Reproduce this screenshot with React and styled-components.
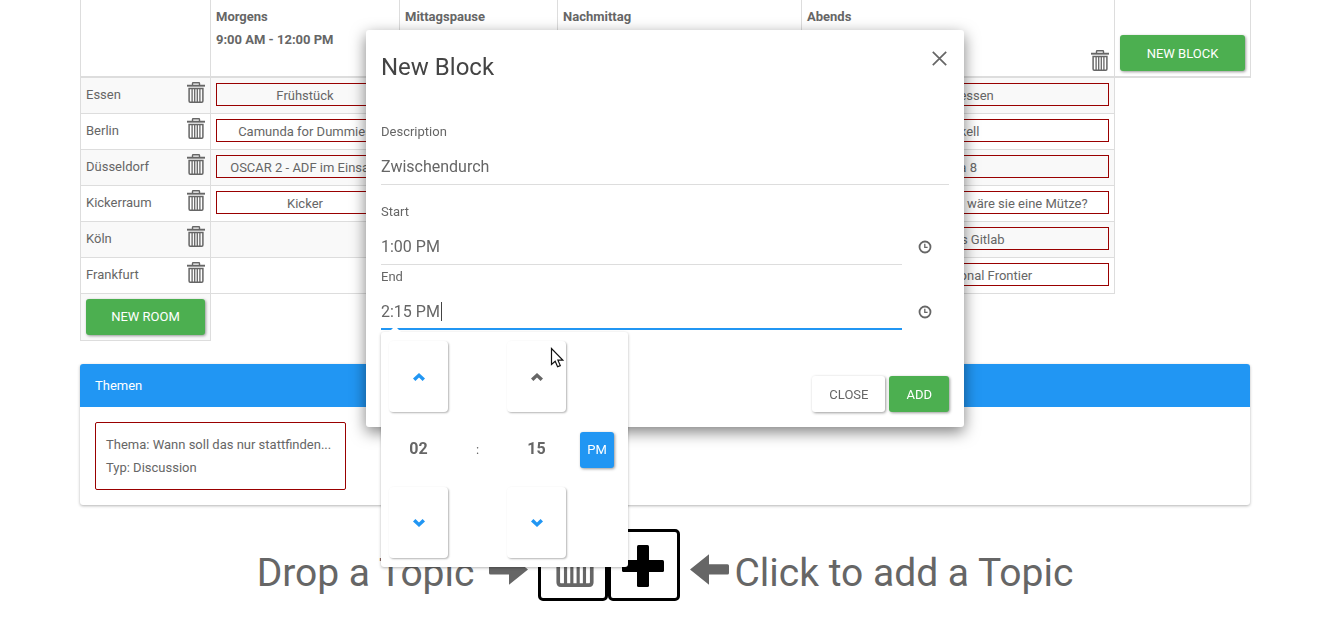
import React, { useEffect, useRef } from "react";
import styled, { createGlobalStyle } from "styled-components";

const GlobalStyle = createGlobalStyle`
  *, *::before, *::after { box-sizing: border-box; }
  body {
    margin: 0;
    padding-right: 5px;
    background: #fff;
    color: #666;
    font: 13px/23px Roboto, "Liberation Sans", sans-serif;
  }
  button, input { font: inherit; color: inherit; }
`;

const Container = styled.main`
  max-width: 1170px;
  margin: 0 auto;
`;

const Schedule = styled.table`
  width: 100%;
  table-layout: fixed;
  border-collapse: collapse;
`;

const HeadCell = styled.th`
  height: 77px;
  padding: 5px;
  border: 1px solid #ddd;
  border-top: 0;
  border-bottom-width: 2px;
  text-align: left;
  vertical-align: ${(p) => (p.$bottom ? "bottom" : "top")};
`;

const HeadIcons = styled.div`
  display: flex;
  justify-content: flex-end;
  height: 20px;
  line-height: 20px;
`;

const Row = styled.tr`
  height: 36px;
  background: ${(p) => (p.$odd ? "#f9f9f9" : "#fff")};
`;

const Cell = styled.td`
  padding: 5px;
  border: 1px solid #ddd;
  background: ${(p) => (p.$shade ? "#f9f9f9" : "transparent")};
  vertical-align: top;
`;

const EdgeCell = styled.td`
  padding: 0;
  background: #fff;
`;

const Room = styled.div`
  display: flex;
  justify-content: space-between;
  height: 23px;
`;

const IconButton = styled.button`
  display: flex;
  align-items: flex-start;
  margin-top: -1px;
  padding: 0;
  border: 0;
  background: none;
  cursor: pointer;
`;

const Topic = styled.div`
  height: 23px;
  border: 1px solid #990000;
  text-align: center;
  white-space: nowrap;
  overflow: hidden;
`;

const tones = {
  green: "background: #4caf50; color: #fff;",
  blue: "background: #2196f3; color: #fff;",
  plain: "background: #fff; color: #666;",
};

const Button = styled.button`
  ${(p) => tones[p.$tone]}
  width: ${(p) => (p.$block ? "100%" : "auto")};
  height: 36px;
  padding: 0 ${(p) => p.$pad || 17}px;
  border: 0;
  border-radius: 3px;
  box-shadow: 1px 1px 3px rgba(0, 0, 0, 0.4);
  font-weight: 400;
  text-transform: uppercase;
  white-space: nowrap;
  cursor: pointer;
`;

const Panel = styled.section`
  margin-top: 23px;
  border-radius: 3px;
  box-shadow: 0 1px 3px rgba(0, 0, 0, 0.3);
`;

const PanelHeading = styled.h2`
  margin: 0;
  padding: 10px 15px;
  border-radius: 3px 3px 0 0;
  background: #2196f3;
  color: #fff;
  font-size: 13px;
  font-weight: 400;
`;

const PanelBody = styled.div`
  display: flex;
  padding: 15px;
`;

const TopicCard = styled.div`
  min-width: 251px;
  padding: 10px;
  border: 1px solid #990000;
  border-radius: 2px;
`;

const Actions = styled.div`
  display: flex;
  justify-content: center;
  align-items: center;
  margin-top: 24px;
  height: 72px;
`;

const ActionText = styled.span`
  padding-top: 17px;
  font-size: 39px;
  line-height: 72px;
  white-space: nowrap;
`;

const ArrowSlot = styled.span`
  display: flex;
  margin: ${(p) => (p.$left ? "10px 5px 0 10px" : "10px 10px 0 15px")};
`;

const ActionButton = styled.button`
  display: flex;
  justify-content: center;
  align-items: center;
  width: ${(p) => (p.$trash ? 70 : 72)}px;
  height: 72px;
  padding: ${(p) => (p.$trash ? "0 0 6px 3px" : "2px 3px 0 0")};
  border: 3px solid #000;
  border-radius: 5px;
  background: #fff;
  cursor: pointer;
`;

const Overlay = styled.div`
  position: fixed;
  inset: 30px 5px 0 0;
`;

const Modal = styled.div`
  max-width: 598px;
  margin: 0 auto;
  padding: 15px;
  border-radius: 3px;
  background: #fff;
  box-shadow: 0 5px 15px rgba(0, 0, 0, 0.5);
`;

const ModalHead = styled.header`
  display: flex;
  justify-content: space-between;
  align-items: flex-start;
  height: 75px;
`;

const Title = styled.h1`
  margin: 0;
  padding-top: 8px;
  color: #444;
  font-size: 24px;
  font-weight: 400;
  line-height: 28px;
`;

const CloseSlot = styled.div`
  padding: 7px 2px;
`;

const Label = styled.label`
  display: block;
  margin-bottom: 5px;
`;

const Input = styled.input`
  display: block;
  width: 100%;
  height: 37px;
  padding: 0;
  border: 0;
  outline: 0;
  border-radius: 0;
  background: transparent;
  font-size: 16px;
  box-shadow: inset 0 ${(p) => (p.$active ? "-2px 0 #2196f3" : "-1px 0 #ddd")};
`;

const Field = styled.div`
  margin-bottom: ${(p) => p.$gap || 0}px;
`;

const TimeRow = styled.div`
  position: relative;
  display: flex;
  align-items: center;
`;

const Addon = styled.span`
  flex: none;
  display: flex;
  justify-content: center;
  width: 47px;
  padding-right: 2px;
`;

const ModalFoot = styled.footer`
  display: flex;
  justify-content: flex-end;
  gap: 4px;
  padding-top: 46px;
`;

const Caret = styled.span`
  position: absolute;
  top: 9px;
  left: 60px;
  width: 1px;
  height: 19px;
  background: #444;
`;

const Picker = styled.div`
  position: absolute;
  top: 39px;
  left: 0;
  display: grid;
  grid-template-columns: 59px 59px 59px 62px;
  grid-template-rows: 71px 75px 71px;
  align-items: center;
  justify-items: center;
  padding: 9px 0 9px 8px;
  border-radius: 3px;
  background: #fff;
  box-shadow: 0 1px 3px rgba(0, 0, 0, 0.3);

  &::before {
    content: "";
    position: absolute;
    top: -6px;
    left: 8px;
    border: 6px solid transparent;
    border-top: 0;
    border-bottom-color: #fff;
  }
`;

const StepButton = styled.button`
  grid-column: ${(p) => p.$column};
  display: flex;
  justify-content: center;
  align-items: center;
  width: 100%;
  height: 71px;
  padding: 0;
  border: 0;
  border-radius: 4px;
  background: #fff;
  color: ${(p) => (p.$muted ? "#666" : "#2196f3")};
  box-shadow: 1px 1px 2px rgba(0, 0, 0, 0.3);
  cursor: pointer;
`;

const Value = styled.span`
  padding-bottom: 2px;
  font-size: 16px;
  font-weight: 700;
`;

const Pointer = styled.svg`
  position: fixed;
  top: 347px;
  left: 550px;
`;

const Trash = ({ width = 18, height = 21, label }) => (
  <svg width={width} height={height} viewBox="0 0 18 21" fill="none" stroke="#666" role="img" aria-label={label}>
    <path d="M5.5 3V1.5Q5.5.8 6.2.8H11.8Q12.5.8 12.5 1.5V3" strokeWidth="1.4" />
    <path d="M0 3.7H18" strokeWidth="1.9" />
    <path d="M2.1 6.4H15.9V19Q15.9 20.2 14.8 20.2H3.2Q2.1 20.2 2.1 19Z" strokeWidth="1.5" />
    <path d="M5.1 6V20M7.7 6V20M10.3 6V20M12.9 6V20" strokeWidth="1.3" />
  </svg>
);

const Arrow = ({ left }) => (
  <svg width="39" height="31" viewBox="0 0 39 31" fill="#666" aria-hidden="true">
    {left ? (
      <path d="M0 15.5L19 .3V10.3H37.5Q39 10.3 39 11.8V19Q39 20.5 37.5 20.5H19V30.7Z" />
    ) : (
      <path d="M39 15.5L20 .3V10.3H1.5Q0 10.3 0 11.8V19Q0 20.5 1.5 20.5H20V30.7Z" />
    )}
  </svg>
);

const Clock = () => (
  <svg width="14" height="14" viewBox="0 0 14 14" fill="none" stroke="#666" aria-hidden="true">
    <circle cx="7" cy="7" r="5.5" strokeWidth="1.8" />
    <path d="M6.8 3.8V7.4H9.6" strokeWidth="1.3" />
  </svg>
);

const Chevron = ({ down }) => (
  <svg width="12" height="8" viewBox="0 0 12 8" fill="currentColor" aria-hidden="true">
    {down ? (
      <path d="M0 2.4L2.4 0 6 3.4 9.6 0 12 2.4 6 8Z" />
    ) : (
      <path d="M0 5.6L6 0 12 5.6 9.6 8 6 4.6 2.4 8Z" />
    )}
  </svg>
);

const columns = [130, 189, 158, 244, 313, 136];

const blocks = [
  ["Morgens", "9:00 AM - 12:00 PM"],
  ["Mittagspause", "12:00 PM - 1:00 PM"],
  ["Nachmittag", "2:15 PM - 6:00 PM"],
  ["Abends", "6:00 PM - 10:00 PM"],
];

const rooms = [
  ["Essen", "Frühstück", "Abendessen"],
  ["Berlin", "Camunda for Dummies", "Haskell"],
  ["Düsseldorf", "OSCAR 2 - ADF im Einsatz", "Java 8"],
  ["Kickerraum", "Kicker", "Wenn die Erde rot wäre, wäre sie eine Mütze?"],
  ["Köln", "", "GitHub vs Gitlab"],
  ["Frankfurt", "", "The Conventional Frontier"],
];

export default function App() {
  const end = useRef(null);

  useEffect(() => {
    end.current.focus();
    end.current.setSelectionRange(7, 7);
  }, []);

  return (
    <>
      <GlobalStyle />
      <Container>
        <Schedule>
          <colgroup>
            {columns.map((w, i) => (
              <col key={i} width={w} />
            ))}
          </colgroup>
          <thead>
            <tr>
              <HeadCell />
              {blocks.map(([name, time]) => (
                <HeadCell key={name}>
                  {name}
                  <br />
                  {time}
                  {name === "Abends" && (
                    <HeadIcons>
                      <IconButton>
                        <Trash label="Delete block" />
                      </IconButton>
                    </HeadIcons>
                  )}
                </HeadCell>
              ))}
              <HeadCell $bottom>
                <Button $tone="green" $block>New Block</Button>
              </HeadCell>
            </tr>
          </thead>
          <tbody>
            {rooms.map(([room, morning, evening], i) => (
              <Row key={room} $odd={i % 2 === 0}>
                <Cell>
                  <Room>
                    {room}
                    <IconButton>
                      <Trash label="Delete room" />
                    </IconButton>
                  </Room>
                </Cell>
                <Cell>{morning && <Topic>{morning}</Topic>}</Cell>
                <Cell />
                <Cell />
                <Cell>
                  <Topic>{evening}</Topic>
                </Cell>
                <EdgeCell />
              </Row>
            ))}
            <tr>
              <Cell $shade>
                <Button $tone="green" $block>New Room</Button>
              </Cell>
            </tr>
          </tbody>
        </Schedule>

        <Panel>
          <PanelHeading>Themen</PanelHeading>
          <PanelBody>
            <TopicCard>
              <div>Thema: Wann soll das nur stattfinden...</div>
              <div>Typ: Discussion</div>
            </TopicCard>
          </PanelBody>
        </Panel>

        <Actions>
          <ActionText>Drop a Topic</ActionText>
          <ArrowSlot>
            <Arrow />
          </ArrowSlot>
          <ActionButton $trash>
            <Trash width={44} height={51} label="Delete topic" />
          </ActionButton>
          <ActionButton aria-label="Add topic">
            <svg width="42" height="42" viewBox="0 0 42 42" fill="#000" aria-hidden="true">
              <rect x="15" y="0" width="12" height="42" rx="1.5" />
              <rect x="0" y="15" width="42" height="12" rx="1.5" />
            </svg>
          </ActionButton>
          <ArrowSlot $left>
            <Arrow left />
          </ArrowSlot>
          <ActionText>Click to add a Topic</ActionText>
        </Actions>
      </Container>

      <Overlay>
        <Modal role="dialog" aria-labelledby="title">
          <ModalHead>
            <Title id="title">New Block</Title>
            <CloseSlot>
              <IconButton aria-label="Dismiss">
                <svg width="15" height="15" viewBox="0 0 15 15" stroke="#666" strokeWidth="1.7" aria-hidden="true">
                  <path d="M.8.8L14.2 14.2M14.2.8L.8 14.2" />
                </svg>
              </IconButton>
            </CloseSlot>
          </ModalHead>
          <Field $gap={15}>
            <Label htmlFor="description">Description</Label>
            <Input id="description" defaultValue="Zwischendurch" />
          </Field>
          <Field>
            <Label htmlFor="start">Start</Label>
            <TimeRow>
              <Input id="start" defaultValue="1:00 PM" />
              <Addon>
                <Clock />
              </Addon>
            </TimeRow>
          </Field>
          <Field>
            <Label htmlFor="end">End</Label>
            <TimeRow>
              <Input id="end" ref={end} $active defaultValue="2:15 PM" />
              <Caret />
              <Addon>
                <Clock />
              </Addon>
              <Picker>
                <StepButton $column={1} aria-label="Hour up"><Chevron /></StepButton>
                <StepButton $column={3} $muted aria-label="Minute up"><Chevron /></StepButton>
                <span />
                <Value>02</Value>
                <span>:</span>
                <Value>15</Value>
                <Button $tone="blue" $pad={7}>PM</Button>
                <StepButton $column={1} aria-label="Hour down"><Chevron down /></StepButton>
                <StepButton $column={3} aria-label="Minute down"><Chevron down /></StepButton>
              </Picker>
            </TimeRow>
          </Field>
          <ModalFoot>
            <Button $tone="plain">Close</Button>
            <Button $tone="green">Add</Button>
          </ModalFoot>
        </Modal>
      </Overlay>

      <Pointer width="14" height="22" viewBox="0 0 14 22" aria-hidden="true">
        <path
          d="M1.5 1.5V17.5L5.2 14.2L7.6 19.8L10.3 18.6L7.9 13.2H12.8Z"
          fill="#fff"
          stroke="#111"
          strokeWidth="1.2"
        />
      </Pointer>
    </>
  );
}
